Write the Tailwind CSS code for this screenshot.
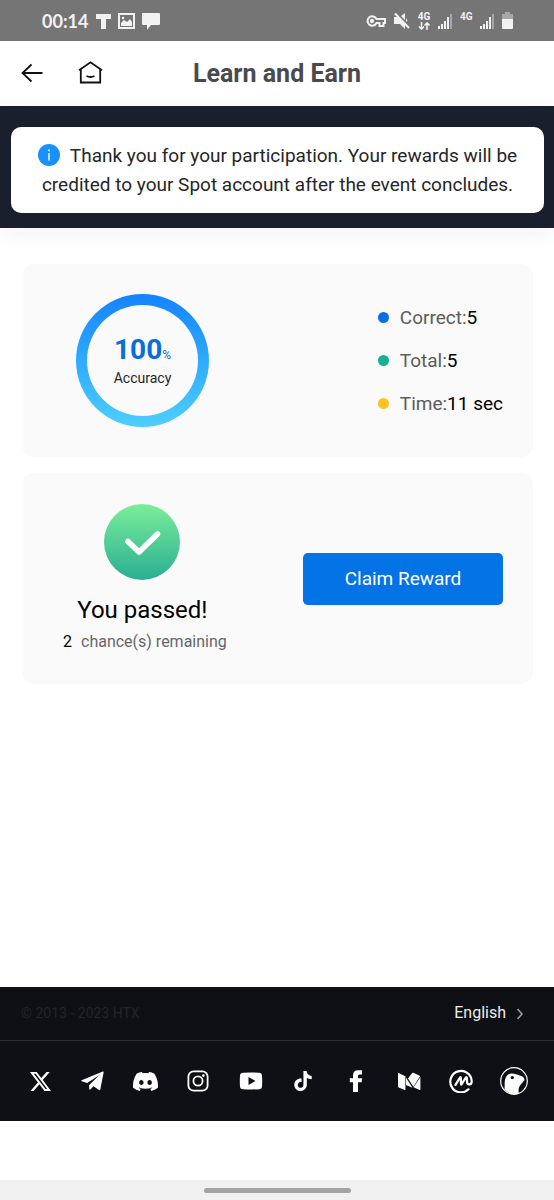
<!DOCTYPE html>
<html lang="en">
<head>
<meta charset="utf-8">
<meta name="viewport" content="width=device-width, initial-scale=1">
<title>Learn and Earn</title>
<script src="https://cdn.jsdelivr.net/npm/@tailwindcss/browser@4"></script>
</head>
<body class="flex min-h-screen flex-col bg-white font-[Roboto,sans-serif] text-black">

<!-- Device status bar -->
<div class="flex h-[41px] items-center justify-between bg-[#757575] pr-[41px] pl-[42px] text-[#f2f2f2]">
  <div class="flex items-center gap-[7px]">
    <span class="font-[Lato,sans-serif] text-[18px] leading-6 font-bold">00:14</span>
    <svg class="h-4 w-4" viewBox="0 0 16 16" fill="currentColor" aria-hidden="true"><path d="M1 1h15v5h-5v10H6V6H1z"/></svg>
    <svg class="h-4 w-[17px]" viewBox="0 0 17 16" fill="none" stroke="currentColor" aria-hidden="true"><rect x="1" y="1" width="15" height="14" stroke-width="2"/><path d="M3 13v-3l3-3 3 2 3-3 2 3v4z" fill="currentColor" stroke="none"/><circle cx="5" cy="5" r="1.3" fill="currentColor" stroke="none"/></svg>
    <svg class="h-[18px] w-[18px]" viewBox="0 0 18 18" fill="currentColor" aria-hidden="true"><path d="M1 1h16q1 0 1 1v10q0 1-1 1H9l-4 5v-5H1q-1 0-1-1V2q0-1 1-1z"/></svg>
  </div>
  <div class="flex items-center gap-2">
    <svg class="h-4 w-5" viewBox="0 0 20 16" fill="none" stroke="currentColor" stroke-width="2" aria-hidden="true"><path d="M10.500 6H19v4h-1.500v3h-4v-3h-3A4.700 4.700 0 1 1 10.500 6z"/><circle cx="6" cy="8" r="1.200"/></svg>
    <svg class="h-[18px] w-4" viewBox="0 0 16 18" fill="currentColor" aria-hidden="true"><path d="M0 5h4l7 7v5l-5-5H0zM7 4l4-3v7zM12 6q2 2 1 4l-1-1z"/><path d="M1 1.500 15 16" stroke="currentColor" stroke-width="2"/></svg>
    <div class="flex w-3 flex-col items-center">
      <span class="text-[10px] leading-[10px] font-bold">4G</span>
      <svg class="h-2 w-3" viewBox="0 0 12 8" fill="none" stroke="currentColor" stroke-width="1.600" aria-hidden="true"><path d="M3.500 0v6.500M1 4.500l2.500 2.500L6 4.500M9 8V1.500M6.500 3.500 9 1l2.500 2.500"/></svg>
    </div>
    <svg class="h-4 w-[14px]" viewBox="0 0 14 16" fill="currentColor" aria-hidden="true"><path d="M0 13h2v3H0zM3 11h2v5H3zM6 8h2v8H6zM9 4h2v12H9z"/><path d="M12 1h2v15h-2z" opacity=".4"/></svg>
    <span class="w-3 pb-2 text-[10px] leading-[10px] font-bold">4G</span>
    <svg class="h-4 w-[14px]" viewBox="0 0 14 16" fill="currentColor" aria-hidden="true"><path d="M0 13h2v3H0zM3 11h2v5H3zM6 8h2v8H6zM9 4h2v12H9z"/><path d="M12 1h2v15h-2z" opacity=".4"/></svg>
    <svg class="h-[17px] w-[11px]" viewBox="0 0 11 17" fill="currentColor" aria-hidden="true"><path d="M0 2h3V0h5v2h3v5H0z" opacity=".4"/><path d="M0 7h11v9q0 1-1 1H1q-1 0-1-1z"/></svg>
  </div>
</div>

<!-- Page header -->
<header class="grid h-[65px] grid-cols-[1fr_auto_1fr] items-center px-[20px]">
  <div class="flex items-center gap-[33px] pb-[2px]">
    <button type="button" aria-label="Back"><svg class="h-6 w-6" viewBox="0 0 24 24" fill="none" stroke="#111" stroke-width="1.800" aria-hidden="true"><path d="M22.500 12H2.500M11.500 3.500 2.500 12l9 8.500"/></svg></button>
    <a href="#" aria-label="Home"><svg class="h-[26px] w-[26px]" viewBox="0 0 26 26" fill="none" stroke="#111" stroke-width="1.800" aria-hidden="true"><path d="M2 10.200 13.500 2.300 25 10.200M3.800 9.500v13h19.400v-13M9.500 16q4 2 8 0"/></svg></a>
  </div>
  <h1 class="text-[25px] font-bold text-[#4a4a4c]">Learn and Earn</h1>
</header>

<!-- Notice -->
<div class="bg-[#1a1f2e] pt-[21px] pr-[10px] pb-[15px] pl-[11px] shadow-[0_4px_24px_rgba(60,40,20,0.06)]">
  <p role="status" class="rounded-[10px] bg-white px-5 py-[14px] text-center text-[19px] leading-[29px] text-[#262626]">
    <svg class="mr-[10px] -mt-1 inline-block h-[22px] w-[22px]" viewBox="0 0 22 22" aria-hidden="true"><circle cx="11" cy="11" r="11" fill="#1890ff"/><path d="M10.300 9h1.400v7.500h-1.400zM10.200 5.500h1.600v1.700h-1.600z" fill="#fff"/></svg>Thank you for your participation. Your rewards will be credited to your Spot account after the event concludes.
  </p>
</div>

<main class="flex flex-1 flex-col gap-4 pt-[36px] pr-[21px] pb-8 pl-[22px]">
  <section class="flex items-center justify-between rounded-xl bg-[#fafafa] py-[30px] pr-[30px] pl-[54px]" aria-label="Results">
    <div class="grid h-[133px] w-[133px] place-items-center rounded-full bg-linear-to-b from-[#1683ff] to-[#4ecfff]">
      <div class="flex h-[111px] w-[111px] flex-col items-center justify-center rounded-full bg-[#fafafa] pt-[3px]">
        <div class="text-[28px] leading-[32px] font-bold text-[#0a6cd6]">100<span class="text-xs font-normal">%</span></div>
        <div class="text-sm leading-6 text-[#1f1f1f]">Accuracy</div>
      </div>
    </div>
    <ul class="flex flex-col gap-[14px] text-[19px] leading-[29px]">
      <li class="flex items-center gap-[11px]"><span class="h-[11px] w-[11px] rounded-full bg-[#0670e4]"></span><span><span class="text-[#5c5c5c]">Correct:</span>5</span></li>
      <li class="flex items-center gap-[11px]"><span class="h-[11px] w-[11px] rounded-full bg-[#18af94]"></span><span><span class="text-[#5c5c5c]">Total:</span>5</span></li>
      <li class="flex items-center gap-[11px]"><span class="h-[11px] w-[11px] rounded-full bg-[#fcc41c]"></span><span><span class="text-[#5c5c5c]">Time:</span>11 sec</span></li>
    </ul>
  </section>

  <section class="flex items-center justify-between rounded-xl bg-[#fafafa] pt-[31px] pr-[30px] pb-[30px] pl-[36px]" aria-label="Outcome">
    <div class="flex flex-col items-center">
      <svg class="h-[76px] w-[76px]" viewBox="0 0 76 76" aria-hidden="true">
        <defs><linearGradient id="pass" x1="0" y1="0" x2="0" y2="1"><stop offset="0" stop-color="#7aee98"/><stop offset="1" stop-color="#2aae94"/></linearGradient></defs>
        <circle cx="38" cy="38" r="38" fill="url(#pass)"/>
        <path d="M24 37.500 35 48 53.500 30" fill="none" stroke="#fff" stroke-width="5.600" stroke-linecap="round" stroke-linejoin="round"/>
      </svg>
      <h2 class="mt-[14px] text-2xl leading-8">You passed!</h2>
      <p class="mt-1 pl-[5px] text-base leading-6 text-[#666]"><span class="mr-[9px] text-black">2</span>chance(s) remaining</p>
    </div>
    <button type="button" class="h-[52px] w-[200px] rounded-[5px] bg-[#0373e6] text-[19px] text-white">Claim Reward</button>
  </section>
</main>

<footer class="bg-[#0e1015] text-white">
  <div class="flex h-[54px] items-center justify-between border-b border-[#2d2f33] pr-[26px] pb-[2px] pl-[21px]">
    <small class="text-sm text-[#22242a]">© 2013 - 2023 HTX</small>
    <button type="button" class="flex items-center gap-[6px] text-base text-[#ececec]">English
      <svg class="h-4 w-4" viewBox="0 0 16 16" fill="none" stroke="#9a9a9c" stroke-width="1.600" aria-hidden="true"><path d="m5.500 4 4.500 5-4.500 5"/></svg>
    </button>
  </div>
  <nav class="flex h-[80px] items-center justify-between px-[26px]" aria-label="Social media">
    <a href="#" aria-label="X" class="grid h-7 w-7 place-items-center"><svg class="h-[21px] w-[21px]" viewBox="0 0 24 24" fill="currentColor"><path d="M18.901 1.153h3.680l-8.040 9.190L24 22.846h-7.406l-5.800-7.584-6.638 7.584H.474l8.600-9.830L0 1.154h7.594l5.243 6.932ZM17.610 20.644h2.039L6.486 3.240H4.298Z"/></svg></a>
    <a href="#" aria-label="Telegram" class="grid h-7 w-7 place-items-center"><svg class="h-5 w-[23px]" viewBox="0 0 23 20" fill="currentColor"><path d="M.6 9.200 21.800.6q1-.3.800.8L19.300 18.500q-.3 1.100-1.400.5l-5.400-3.700-3.200 3.300q-.7.700-.9-.4l-.5-3.900L18.500 4 6.200 12 .8 10.200q-.9-.4-.2-1z"/></svg></a>
    <a href="#" aria-label="Discord" class="grid h-7 w-7 place-items-center"><svg class="h-[25px] w-[25px]" viewBox="0 0 24 24" fill="currentColor"><path d="M20.317 4.3698a19.7913 19.7913 0 00-4.8851-1.5152.0741.0741 0 00-.0785.0371c-.211.3753-.4447.8648-.6083 1.2495-1.8447-.2762-3.68-.2762-5.4868 0-.1636-.3933-.4058-.8742-.6177-1.2495a.077.077 0 00-.0785-.037 19.7363 19.7363 0 00-4.8852 1.515.0699.0699 0 00-.0321.0277C.5334 9.0458-.319 13.5799.0992 18.0578a.0824.0824 0 00.0312.0561c2.0528 1.5076 4.0413 2.4228 5.9929 3.0294a.0777.0777 0 00.0842-.0276c.4616-.6304.8731-1.2952 1.226-1.9942a.076.076 0 00-.0416-.1057c-.6528-.2476-1.2743-.5495-1.8722-.8923a.077.077 0 01-.0076-.1277c.1258-.0943.2517-.1923.3718-.2914a.0743.0743 0 01.0776-.0105c3.9278 1.7933 8.18 1.7933 12.0614 0a.0739.0739 0 01.0785.0095c.1202.099.246.1981.3728.2924a.077.077 0 01-.0066.1276 12.2986 12.2986 0 01-1.873.8914.0766.0766 0 00-.0407.1067c.3604.698.7719 1.3628 1.225 1.9932a.076.076 0 00.0842.0286c1.961-.6067 3.9495-1.5219 6.0023-3.0294a.077.077 0 00.0313-.0552c.5004-5.177-.8382-9.6739-3.5485-13.6604a.061.061 0 00-.0312-.0286zM8.02 15.3312c-1.1825 0-2.1569-1.0857-2.1569-2.419 0-1.3332.9555-2.4189 2.157-2.4189 1.2108 0 2.1757 1.0952 2.1568 2.419 0 1.3332-.9555 2.4189-2.1569 2.4189zm7.9748 0c-1.1825 0-2.1569-1.0857-2.1569-2.419 0-1.3332.9554-2.4189 2.1569-2.4189 1.2108 0 2.1757 1.0952 2.1568 2.419 0 1.3332-.946 2.4189-2.1568 2.4189Z"/></svg></a>
    <a href="#" aria-label="Instagram" class="grid h-7 w-7 place-items-center"><svg class="h-[22px] w-[22px]" viewBox="0 0 22 22" fill="none" stroke="currentColor" stroke-width="1.800"><rect x="1.400" y="1.400" width="19.200" height="19.200" rx="5.200"/><circle cx="11" cy="11" r="4.600"/><circle cx="16.400" cy="5.600" r="1.300" fill="currentColor" stroke="none"/></svg></a>
    <a href="#" aria-label="YouTube" class="grid h-7 w-7 place-items-center"><svg class="h-[18px] w-6" viewBox="0 0 24 18" fill="currentColor"><path fill-rule="evenodd" d="M4 .8Q12 .2 20 .8q3 .2 3 3 .4 5.200 0 10.400 0 2.800-3 3-8 .5-16 0-3-.2-3-3-.4-5.200 0-10.400 0-2.800 3-3zM9.500 5v8l7-4z"/></svg></a>
    <a href="#" aria-label="TikTok" class="grid h-7 w-7 place-items-center"><svg class="h-5 w-5" viewBox="0 0 24 24" fill="currentColor"><path d="M12.525.02c1.310-.02 2.610-.01 3.910-.02.08 1.530.63 3.090 1.750 4.170 1.120 1.110 2.700 1.620 4.240 1.790v4.030c-1.440-.05-2.890-.35-4.200-.97-.57-.26-1.100-.59-1.620-.93-.01 2.920.01 5.840-.02 8.750-.08 1.400-.54 2.790-1.350 3.940-1.310 1.920-3.580 3.170-5.910 3.210-1.430.08-2.860-.31-4.080-1.030-2.020-1.190-3.440-3.370-3.650-5.710-.02-.5-.03-1-.01-1.490.18-1.900 1.120-3.720 2.580-4.960 1.660-1.440 3.980-2.130 6.150-1.720.02 1.480-.04 2.960-.04 4.440-.99-.32-2.150-.23-3.020.37-.63.41-1.110 1.040-1.360 1.750-.21.51-.15 1.070-.14 1.610.24 1.640 1.820 3.020 3.500 2.870 1.120-.01 2.190-.66 2.770-1.610.19-.33.4-.67.41-1.060.1-1.790.06-3.570.07-5.360.01-4.030-.01-8.050.02-12.070z"/></svg></a>
    <a href="#" aria-label="Facebook" class="grid h-7 w-7 place-items-center"><svg class="h-[22px] w-[14px]" viewBox="0 0 14 22" fill="currentColor"><path d="M4 22V12.200H.8V8.300H4V5.600Q4 .2 9.200.2h3.800v4.200h-2.500q-1.500 0-1.500 1.600v2.300h4.100l-.5 3.900H9V22z"/></svg></a>
    <a href="#" aria-label="Medium" class="grid h-7 w-7 place-items-center"><svg class="h-[19px] w-6" viewBox="0 0 24 19" fill="currentColor"><path d="M1 .8 8.400 4.300v13.400q0 .7-.7.400L1.700 15.500Q1 15.200 1 14.500zM15 1.200q.5-.8 1.400-.4l6.800 3.300-6.800 10.700-5.400-8.400zM9 5.500l6.400 10.300L9 12.900zM23.400 5v12.500q0 .9-.8.500l-6-2.800z"/></svg></a>
    <a href="#" aria-label="CoinMarketCap" class="grid h-7 w-7 place-items-center"><svg class="h-6 w-6" viewBox="0 0 24 24" fill="none" stroke="currentColor" stroke-width="2.200" stroke-linecap="round" stroke-linejoin="round"><path d="M19.500 20.300A10.700 10.700 0 1 1 22.700 12.200q0 3.200-2.400 3.200-2.300 0-2.300-3V9.600q0-2.600-1.600-.4L12.800 15q-.9 1.300-.9-.4V9.200q0-2-1.200-.2L6.500 15.800"/></svg></a>
    <a href="#" aria-label="CoinGecko" class="grid h-7 w-7 place-items-center"><svg class="h-7 w-7" viewBox="0 0 28 28" fill="none"><circle cx="14" cy="14" r="13.300" stroke="currentColor" stroke-width="1.200"/><path d="M4.500 22.500C5 18 4 14 6 10q2.500-4.200 8-3.200 3 .5 6 1.800 4 1 4.500 4.400c-2 3-4.500 4.500-5.500 7.600q-1 3 0 6.200-7.500 2.200-14.500-4.300z" fill="currentColor"/><circle cx="12.300" cy="10.600" r="1.600" fill="#0e1015"/></svg></a>
  </nav>
</footer>

<!-- Device gesture bar -->
<div class="mt-[59px] grid h-5 place-items-center bg-[#f0f0f0]">
  <div class="h-[5px] w-[147px] rounded-full bg-[#a3a3a3]"></div>
</div>
</body>
</html>
